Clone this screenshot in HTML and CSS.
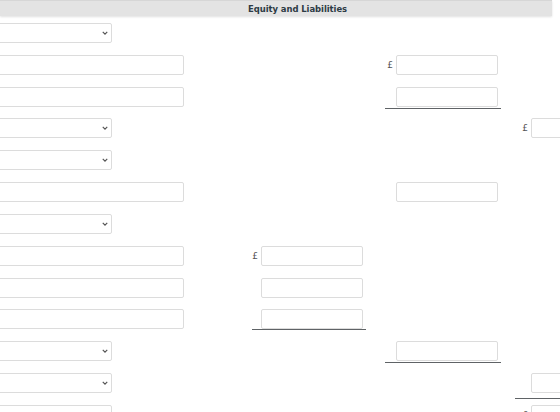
FILE: index.html
```html
<!DOCTYPE html>
<html>
<head>
<meta charset="utf-8">
<link rel="stylesheet" href="styles.css">
</head>
<body>
<div class="head"><span class="title">Equity and Liabilities</span></div>
<div class="sheet">
  <div class="row"><div class="c1"><span class="sel"><select></select><svg class="chev" viewBox="0 0 8 5"><path d="M1 1l3 3 3-3" /></svg></span></div></div>
  <div class="row"><div class="c1"><input class="txt"></div><div class="c3 cell"><span class="gbp">£</span><input class="num"></div></div>
  <div class="row"><div class="c1"><input class="txt"></div><div class="c3 cell ul"><input class="num"></div></div>
  <div class="row"><div class="c1"><span class="sel"><select></select><svg class="chev" viewBox="0 0 8 5"><path d="M1 1l3 3 3-3" /></svg></span></div><div class="c4 cell"><span class="gbp">£</span><input class="num"></div></div>
  <div class="row"><div class="c1"><span class="sel"><select></select><svg class="chev" viewBox="0 0 8 5"><path d="M1 1l3 3 3-3" /></svg></span></div></div>
  <div class="row"><div class="c1"><input class="txt"></div><div class="c3 cell"><input class="num"></div></div>
  <div class="row"><div class="c1"><span class="sel"><select></select><svg class="chev" viewBox="0 0 8 5"><path d="M1 1l3 3 3-3" /></svg></span></div></div>
  <div class="row"><div class="c1"><input class="txt"></div><div class="c2 cell"><span class="gbp">£</span><input class="num"></div></div>
  <div class="row"><div class="c1"><input class="txt"></div><div class="c2 cell"><input class="num"></div></div>
  <div class="row"><div class="c1"><input class="txt"></div><div class="c2 cell ul"><input class="num"></div></div>
  <div class="row"><div class="c1"><span class="sel"><select></select><svg class="chev" viewBox="0 0 8 5"><path d="M1 1l3 3 3-3" /></svg></span></div><div class="c3 cell ul"><input class="num"></div></div>
  <div class="row"><div class="c1"><span class="sel"><select></select><svg class="chev" viewBox="0 0 8 5"><path d="M1 1l3 3 3-3" /></svg></span></div><div class="c4 cell ul ul-low"><input class="num"></div></div>
  <div class="row"><div class="c1"><span class="sel"><select></select><svg class="chev" viewBox="0 0 8 5"><path d="M1 1l3 3 3-3" /></svg></span></div><div class="c4 cell"><span class="gbp">£</span><input class="num"></div></div>
</div>
</body>
</html>
```
FILE: styles.css
```css
html, body {
  margin: 0;
  padding: 0;
  background: #fff;
  overflow: hidden;
  width: 560px;
  height: 412px;
}
body {
  font-family: "DejaVu Sans", Verdana, sans-serif;
  color: #333;
}
.head {
  width: 552px;
  height: 16px;
  background: #e3e3e3;
  box-shadow: 0 1px 2px rgba(0, 0, 0, 0.12);
  border-top: 1px solid #d6d6d6;
  box-sizing: border-box;
  display: flex;
  align-items: center;
  padding-left: 248px;
}
.title {
  font-family: "DejaVu Sans Condensed", "DejaVu Sans", sans-serif;
  font-weight: bold;
  font-size: 9.4px;
  color: #2d3b45;
  letter-spacing: -0.05px;
}
.sheet {
  margin-left: -60px;
  margin-top: 7px;
  display: flex;
  flex-direction: column;
  gap: 11.83px;
}
.row {
  display: grid;
  grid-template-columns: 312px 133px 130px 121px;
  height: 20px;
}
.c1 { grid-column: 1; display: flex; }
.c2 { grid-column: 2; width: 114px; }
.c3 { grid-column: 3; width: 116px; }
.c4 { grid-column: 4; width: 121px; }
.cell {
  display: flex;
  justify-content: flex-end;
  align-items: flex-start;
  gap: 3px;
  padding-right: 3px;
  box-sizing: border-box;
  height: 21px;
}
.ul { border-bottom: 1px solid #5f6366; }
.c3.ul { height: 22px; }
.ul-low { height: 26px; }
.gbp {
  font-size: 9px;
  color: #555;
  line-height: 20px;
}
input, select {
  margin: 0;
  box-sizing: border-box;
  height: 20px;
  border: 1px solid #dcdcdc;
  border-radius: 2px;
  background: #fff;
  outline: none;
  font: inherit;
  padding: 0 4px;
}
.txt { width: 244px; }
.num { width: 102px; }
.sel {
  position: relative;
  display: block;
  width: 172px;
  height: 20px;
}
.sel select {
  appearance: none;
  -webkit-appearance: none;
  width: 172px;
}
.chev {
  position: absolute;
  right: 4px;
  top: 8px;
  width: 6px;
  height: 4px;
  fill: none;
  stroke: #555;
  stroke-width: 1.6;
}
```
